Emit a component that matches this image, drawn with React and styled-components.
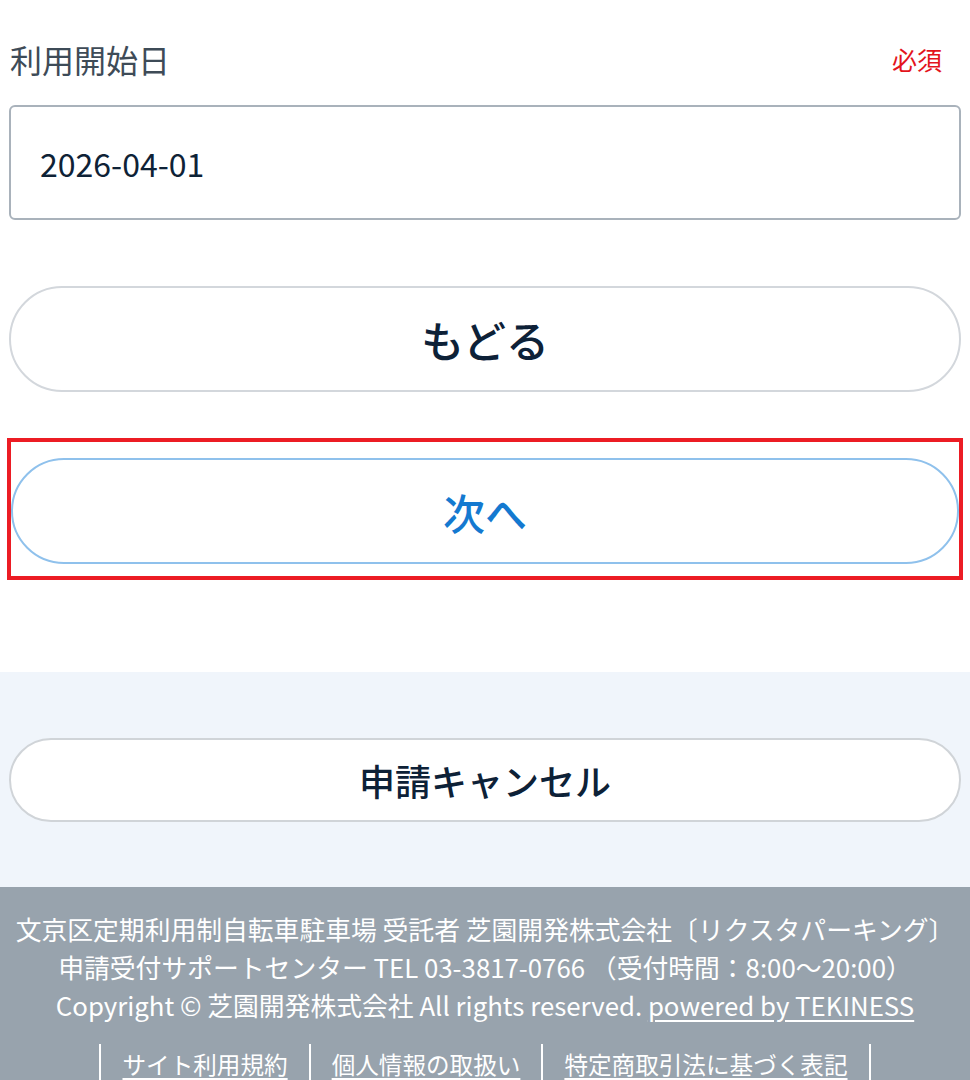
import React from "react";
import styled, { createGlobalStyle } from "styled-components";

const GlobalStyle = createGlobalStyle`
  body {
    margin: 0;
    background: #fff;
    font-family: "Noto Sans CJK JP", "Noto Sans", sans-serif;
  }
`;

const App = () => {
  return (
    <>
      <GlobalStyle />
      <FormSection>
        <FieldHeader>
          <FieldLabel>利用開始日</FieldLabel>
          <RequiredMark>必須</RequiredMark>
        </FieldHeader>
        <DateInput type="text" defaultValue="2026-04-01" />

        <PillButton $tone="back">もどる</PillButton>

        <Highlight>
          <PillButton $tone="next">次へ</PillButton>
        </Highlight>
      </FormSection>

      <CancelSection>
        <PillButton $tone="cancel">申請キャンセル</PillButton>
      </CancelSection>

      <Footer>
        <FooterText>
          文京区定期利用制自転車駐車場 受託者 芝園開発株式会社〔リクスタパーキング〕
        </FooterText>
        <FooterText>
          申請受付サポートセンター TEL 03-3817-0766 （受付時間：8:00〜20:00）
        </FooterText>
        <FooterText>
          Copyright © 芝園開発株式会社 All rights reserved.{" "}
          <FooterLink href="#">powered by TEKINESS</FooterLink>
        </FooterText>
        <LinkList>
          <LinkItem>
            <FooterLink href="#">サイト利用規約</FooterLink>
          </LinkItem>
          <LinkItem>
            <FooterLink href="#">個人情報の取扱い</FooterLink>
          </LinkItem>
          <LinkItem>
            <FooterLink href="#">特定商取引法に基づく表記</FooterLink>
          </LinkItem>
        </LinkList>
      </Footer>
    </>
  );
};

export default App;

const FormSection = styled.main`
  padding: 35px 9px 92px;
  display: flex;
  flex-direction: column;
`;

const FieldHeader = styled.div`
  height: 48px;
  display: flex;
  justify-content: space-between;
  align-items: center;
  padding-right: 19px;
`;

const FieldLabel = styled.label`
  font-size: 32px;
  color: #3e4b57;
  padding-left: 1px;
`;

const RequiredMark = styled.span`
  font-size: 25px;
  color: #e3141c;
`;

const DateInput = styled.input`
  margin-top: 22px;
  height: 115px;
  box-sizing: border-box;
  width: 100%;
  border: 2px solid #a9b2bb;
  border-radius: 6px;
  padding: 0 29px;
  font-family: inherit;
  font-size: 32px;
  color: #0e2236;
  background: #fff;
  outline: none;
`;

const tones = {
  back: { border: "#d3d7dc", color: "#0d2137", size: "43px", height: "106px", weight: 500 },
  next: { border: "#8fc1ec", color: "#1479d0", size: "42px", height: "106px", weight: 500 },
  cancel: { border: "#d0d4d8", color: "#0d2137", size: "36px", height: "84px", weight: 500 },
};

const PillButton = styled.button`
  width: 100%;
  height: ${(p) => tones[p.$tone].height};
  margin-top: ${(p) => (p.$tone === "back" ? "66px" : "0")};
  box-sizing: border-box;
  border: 2px solid ${(p) => tones[p.$tone].border};
  border-radius: 999px;
  background: #fff;
  color: ${(p) => tones[p.$tone].color};
  font-family: inherit;
  font-size: ${(p) => tones[p.$tone].size};
  font-weight: ${(p) => tones[p.$tone].weight};
  cursor: pointer;
`;

const Highlight = styled.div`
  margin: 46px -2px 0;
  border: 4px solid #ec1c24;
  padding: 16px 0 12px;
`;

const CancelSection = styled.section`
  background: #f0f5fb;
  padding: 66px 9px 65px;
`;

const Footer = styled.footer`
  background: #98a3ad;
  color: #fff;
  text-align: center;
  padding: 23px 0 0;
  height: 193px;
  box-sizing: border-box;
  overflow: hidden;
`;

const FooterText = styled.p`
  margin: 0;
  font-size: 25.8px;
  line-height: 38px;
  white-space: nowrap;
`;

const FooterLink = styled.a`
  color: #fff;
  text-decoration: underline;
  text-underline-offset: 4px;
`;

const LinkList = styled.ul`
  list-style: none;
  margin: 20px auto 0;
  padding: 0;
  display: flex;
  justify-content: center;
  border-left: 2px solid #fff;
  width: fit-content;
`;

const LinkItem = styled.li`
  font-size: 23.6px;
  line-height: 40px;
  padding: 0 21px;
  border-right: 2px solid #fff;
`;
